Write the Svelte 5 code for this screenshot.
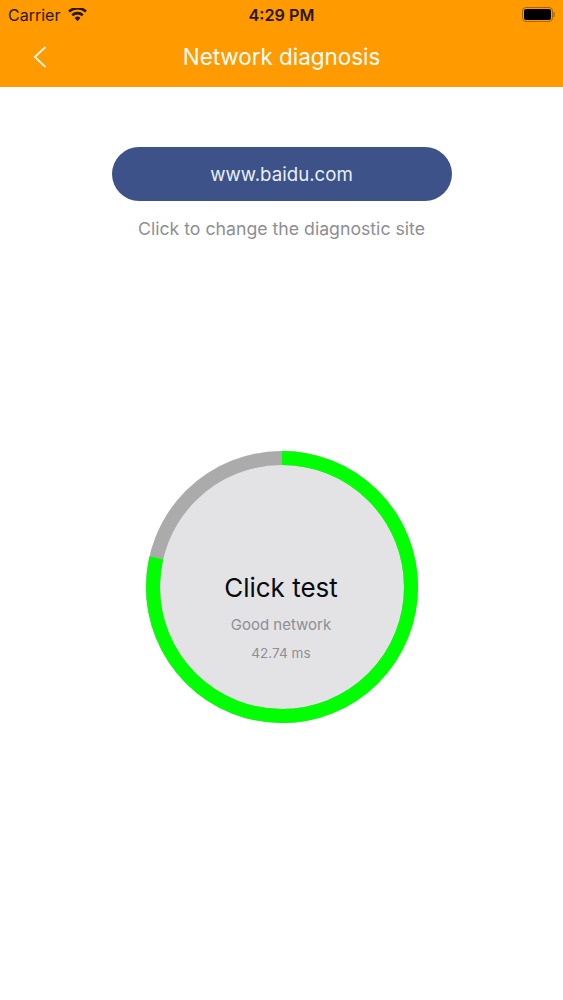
<script>
  const size = 272;
  const stroke = 14;
  const r = (size - stroke) / 2;
  const circumference = 2 * Math.PI * r;
  // share of the ring that is lit, measured clockwise from the top
  const progress = 0.786;
</script>

<div class="page">
  <header class="header">
    <div class="status">
      <div class="status-left">
        <span class="carrier">Carrier</span>
        <svg class="wifi" viewBox="0 0 20 15" width="19" height="14">
          <path d="M10 14.2 6.9 10.6a4.6 4.6 0 0 1 6.2 0L10 14.2Z" fill="#2b1700" />
          <path d="M5.3 8.8 3.4 6.6a10 10 0 0 1 13.2 0l-1.9 2.2a7.2 7.2 0 0 0-9.4 0Z" fill="#2b1700" />
          <path d="M1.8 4.8 0 2.7a15.2 15.2 0 0 1 20 0l-1.8 2.1a12.5 12.5 0 0 0-16.4 0Z" fill="#2b1700" />
        </svg>
      </div>
      <span class="time">4:29 PM</span>
      <div class="battery">
        <span class="battery-body"><span class="battery-fill"></span></span>
        <span class="battery-cap"></span>
      </div>
    </div>
    <div class="nav">
      <button class="back" aria-label="Back">
        <svg viewBox="0 0 14 24" width="14" height="24">
          <path d="M12.5 2 1.8 12 12.5 22" fill="none" stroke="#fff6e0" stroke-width="1.8" />
        </svg>
      </button>
      <h1 class="title">Network diagnosis</h1>
    </div>
  </header>

  <main class="content">
    <button class="site">www.baidu.com</button>
    <p class="hint">Click to change the diagnostic site</p>

    <div class="gauge">
      <svg class="ring" viewBox="0 0 {size} {size}" width={size} height={size}>
        <circle cx={size / 2} cy={size / 2} r={r + stroke / 2} fill="#e3e3e6" />
        <circle cx={size / 2} cy={size / 2} {r} fill="none" stroke="#ababab" stroke-width={stroke} />
        <circle
          cx={size / 2}
          cy={size / 2}
          {r}
          fill="none"
          stroke="#00ff00"
          stroke-width={stroke}
          stroke-dasharray="{circumference * progress} {circumference}"
          transform="rotate(-90 {size / 2} {size / 2})"
        />
      </svg>
      <div class="readout">
        <div class="action">Click test</div>
        <div class="quality">Good network</div>
        <div class="latency">42.74 ms</div>
      </div>
    </div>
  </main>
</div>

<style>
  :global(body) {
    margin: 0;
    background: #fff;
  }
  .page {
    width: 563px;
    height: 1000px;
    overflow: hidden;
    font-family: Inter, "Liberation Sans", sans-serif;
  }
  .header {
    height: 87px;
    background: #ff9a00;
    display: flex;
    flex-direction: column;
  }
  .status {
    height: 29px;
    padding: 0 8px 0 8px;
    display: grid;
    grid-template-columns: 1fr auto 1fr;
    align-items: center;
    color: #2b1700;
    font-size: 16px;
  }
  .status-left {
    display: flex;
    align-items: center;
    gap: 8px;
  }
  .time {
    font-weight: 600;
    font-size: 16.2px;
  }
  .battery {
    justify-self: end;
    display: flex;
    align-items: center;
  }
  .battery-body {
    width: 31px;
    height: 15px;
    box-sizing: border-box;
    border: 1.5px solid #a86400;
    border-radius: 4px;
    padding: 1px;
    display: flex;
  }
  .battery-fill {
    flex: 1;
    background: #000;
    border-radius: 2px;
  }
  .battery-cap {
    width: 2px;
    height: 5px;
    margin-right: 0;
    background: #c27a00;
  }
  .nav {
    flex: 1;
    display: flex;
    align-items: center;
    justify-content: center;
    position: relative;
    padding-bottom: 3px;
  }
  .back {
    position: absolute;
    left: 33px;
    top: 16px;
    padding: 0;
    border: 0;
    background: none;
    display: flex;
  }
  .title {
    margin: 0;
    font-size: 22.4px;
    font-weight: 400;
    color: #fff;
  }
  .content {
    display: flex;
    flex-direction: column;
    align-items: center;
    padding-top: 60px;
  }
  .site {
    width: 340px;
    height: 54px;
    padding: 0;
    border: 0;
    border-radius: 27px;
    background: #3d5288;
    color: #e6effa;
    font: inherit;
    font-size: 18.7px;
  }
  .hint {
    margin: 17px 0 0;
    font-size: 17.7px;
    line-height: 21px;
    color: #8e8e93;
  }
  .gauge {
    margin-top: 212px;
    margin-left: 1px;
    width: 272px;
    height: 272px;
    display: grid;
  }
  .ring,
  .readout {
    grid-area: 1 / 1;
  }
  .ring {
    display: block;
  }
  .readout {
    display: flex;
    flex-direction: column;
    align-items: center;
    padding-top: 119px;
    padding-right: 2px;
  }
  .action {
    font-size: 26px;
    line-height: 36px;
    color: #0a0a0a;
  }
  .quality {
    margin-top: 10px;
    font-size: 15px;
    line-height: 18px;
    color: #8e8e93;
  }
  .latency {
    margin-top: 10px;
    font-size: 13.6px;
    line-height: 18px;
    color: #8e8e93;
  }
</style>
